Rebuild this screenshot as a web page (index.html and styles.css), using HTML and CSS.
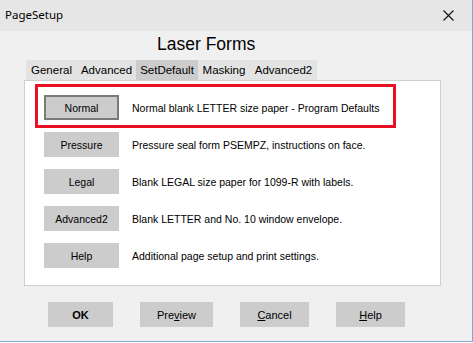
FILE: index.html
```html
<!DOCTYPE html>
<html lang="en">
<head>
  <meta charset="UTF-8">
  <title>PageSetup</title>
  <link rel="stylesheet" href="styles.css">
</head>
<body>
  <div class="window">
    <div class="titlebar">
      <span class="title">PageSetup</span>
      <svg class="close" width="11" height="11" viewBox="0 0 11 11">
        <path d="M0.5 0.5 L10.5 10.5 M10.5 0.5 L0.5 10.5" stroke="#111" stroke-width="1.1" fill="none"/>
      </svg>
    </div>
    <div class="content">
      <h1>Laser Forms</h1>
      <div class="tabs">
        <span class="tab t-general">General</span>
        <span class="tab t-advanced">Advanced</span>
        <span class="tab t-default active">SetDefault</span>
        <span class="tab t-masking">Masking</span>
        <span class="tab t-advanced2">Advanced2</span>
      </div>
      <div class="panel">
        <div class="row">
          <div class="highlight"></div>
          <button class="btn current">Normal</button>
          <span class="desc">Normal blank LETTER size paper - Program Defaults</span>
        </div>
        <div class="row">
          <button class="btn">Pressure</button>
          <span class="desc">Pressure seal form PSEMPZ, instructions on face.</span>
        </div>
        <div class="row">
          <button class="btn">Legal</button>
          <span class="desc">Blank LEGAL size paper for 1099-R with labels.</span>
        </div>
        <div class="row">
          <button class="btn">Advanced2</button>
          <span class="desc">Blank LETTER and No. 10 window envelope.</span>
        </div>
        <div class="row">
          <button class="btn">Help</button>
          <span class="desc">Additional page setup and print settings.</span>
        </div>
      </div>
      <div class="footer">
        <button class="btn ok">OK</button>
        <button class="btn preview">Pre<u>v</u>iew</button>
        <button class="btn cancel"><u>C</u>ancel</button>
        <button class="btn help"><u>H</u>elp</button>
      </div>
    </div>
  </div>
</body>
</html>
```

FILE: styles.css
```css
body {
  margin: 0;
  padding: 0;
  background: #ffffff;
  font-family: "Liberation Sans", Arial, sans-serif;
}

.window {
  width: 472px;
  height: 341px;
  background-color: #f0f0f0;
  border-right: 1px solid #87a5cf;
  border-bottom: 1px solid #87a5cf;
  overflow: hidden;
}

.titlebar {
  height: 31px;
  background-color: #e6e6e6;
  display: flex;
  align-items: center;
  justify-content: space-between;
  padding: 0 18px 0 5px;
}

.title {
  font-family: "Noto Sans", sans-serif;
  font-size: 11.5px;
  color: #000;
  margin-top: -2px;
}

.close {
  margin-top: -1px;
}

.content {
  padding: 0 31px 0 24px;
}

h1 {
  margin: 0 0 0 133px;
  height: 29px;
  line-height: 27px;
  font-size: 17.5px;
  font-weight: normal;
  color: #000;
}

.tabs {
  display: flex;
  margin-left: 2px;
  height: 20px;
}

.tab {
  display: block;
  height: 20px;
  line-height: 21px;
  font-size: 11.5px;
  text-align: center;
  background-color: #e3e3e3;
  color: #000;
}

.tab.active {
  background-color: #cccccc;
}

.t-general { width: 51px; }
.t-advanced { width: 59px; }
.t-default { width: 62px; }
.t-masking { width: 52px; }
.t-advanced2 { width: 67px; }

.panel {
  background-color: #ffffff;
  border: 1px solid #cfcfcf;
  padding: 14px 0 0 19px;
  box-sizing: border-box;
  height: 206px;
  display: flex;
  flex-direction: column;
  gap: 12px;
}

.row {
  position: relative;
  display: flex;
  align-items: center;
  gap: 13px;
  height: 25px;
}

.highlight {
  position: absolute;
  left: -9px;
  top: -11px;
  width: 361px;
  height: 44px;
  border: 3px solid #e81123;
  box-sizing: border-box;
}

.btn {
  font-family: "Liberation Sans", Arial, sans-serif;
  font-size: 10.5px;
  color: #000;
  background-color: #cccccc;
  border: none;
  padding: 0;
  height: 25px;
  width: 75px;
  box-sizing: border-box;
  flex-shrink: 0;
}

.btn.current {
  border: 2px solid #7a7a7a;
}

.desc {
  font-size: 10.5px;
  color: #000;
  white-space: nowrap;
}

.footer {
  display: flex;
  gap: 27px;
  margin-top: 16px;
  padding-left: 24px;
}

.footer .btn {
  font-size: 11px;
}

.ok {
  width: 65px;
  font-weight: bold;
}

.preview { width: 73px; }
.cancel { width: 69px; }
.help { width: 69px; }
```
